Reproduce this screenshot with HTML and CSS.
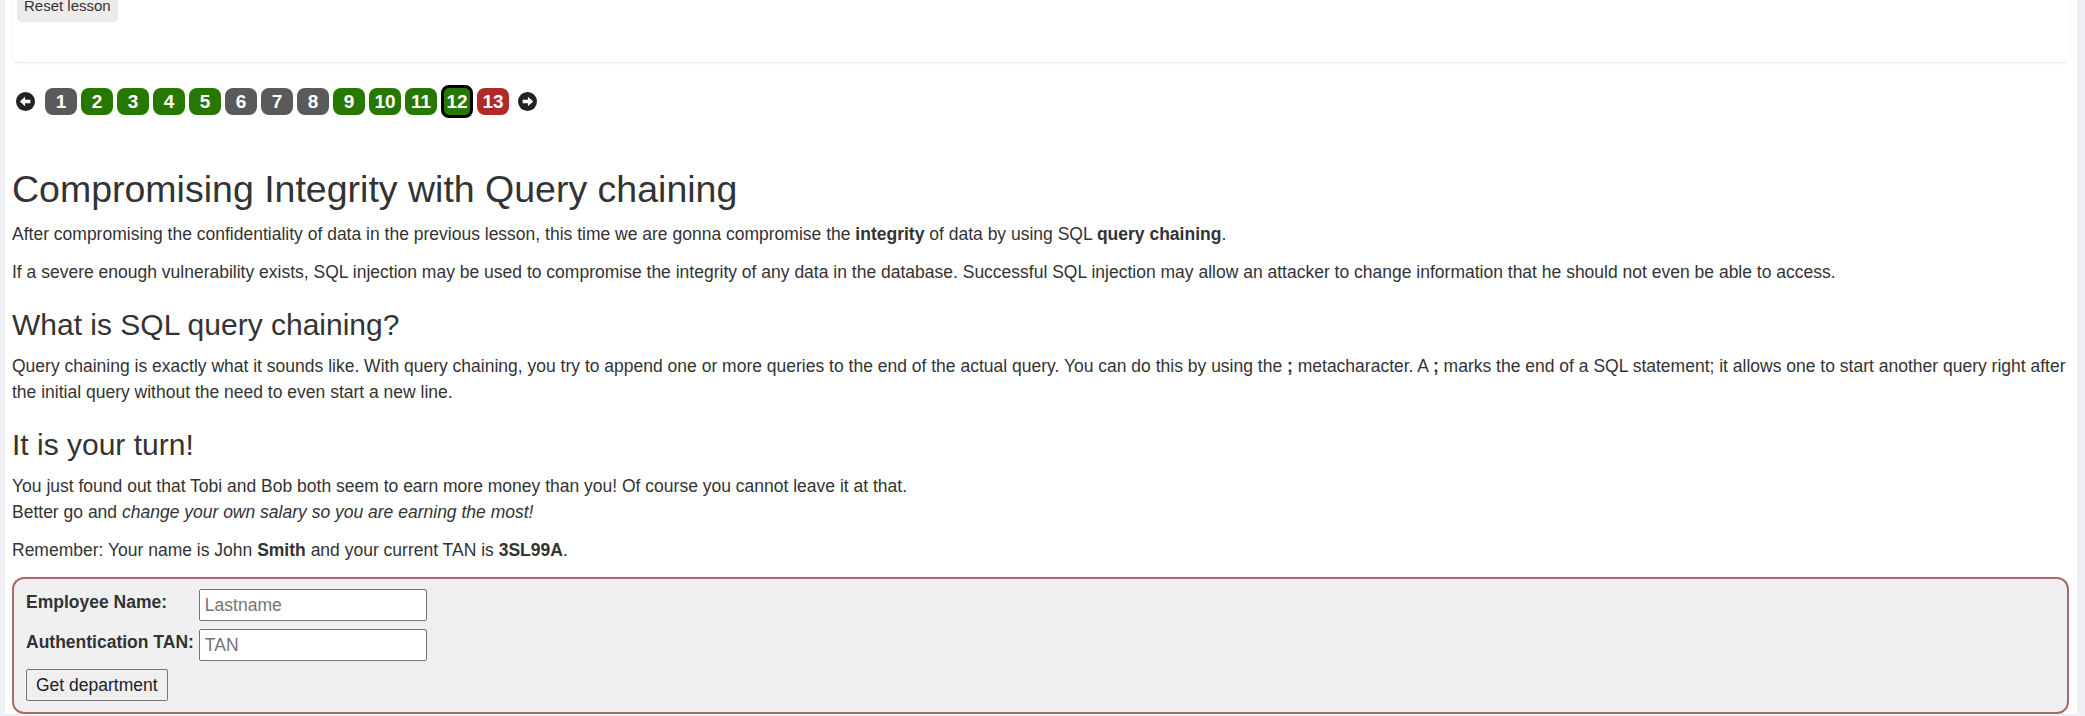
FILE: index.html
```html
<!DOCTYPE html>
<html lang="en">
<head>
<meta charset="utf-8">
<title>SQL Injection (intro)</title>
<link rel="stylesheet" href="styles.css">
</head>
<body>
<div class="main">
  <div class="top-card">
    <button class="reset-btn" type="button">Reset lesson</button>
  </div>

  <nav class="pager">
    <span class="pager-arrow">
      <svg width="19" height="19" viewBox="0 0 18 18"><circle cx="9" cy="9" r="9" fill="#222"/><path d="M3.6 9 L8.6 4.4 V7.4 H13.6 V10.6 H8.6 V13.6 Z" fill="#fff"/></svg>
    </span>
    <span class="page page-gray">1</span>
    <span class="page page-green">2</span>
    <span class="page page-green">3</span>
    <span class="page page-green">4</span>
    <span class="page page-green">5</span>
    <span class="page page-gray">6</span>
    <span class="page page-gray">7</span>
    <span class="page page-gray">8</span>
    <span class="page page-green">9</span>
    <span class="page page-green">10</span>
    <span class="page page-green">11</span>
    <span class="page page-green page-current">12</span>
    <span class="page page-red">13</span>
    <span class="pager-arrow pager-next">
      <svg width="19" height="19" viewBox="0 0 18 18"><circle cx="9" cy="9" r="9" fill="#222"/><path d="M14.4 9 L9.4 4.4 V7.4 H4.4 V10.6 H9.4 V13.6 Z" fill="#fff"/></svg>
    </span>
  </nav>

  <div class="lesson">
    <h1 class="title">Compromising Integrity with Query chaining</h1>
    <p class="text">After compromising the confidentiality of data in the previous lesson, this time we are gonna compromise the <b>integrity</b> of data by using SQL <b>query chaining</b>.</p>
    <p class="text">If a severe enough vulnerability exists, SQL injection may be used to compromise the integrity of any data in the database. Successful SQL injection may allow an attacker to change information that he should not even be able to access.</p>

    <h2 class="subtitle">What is SQL query chaining?</h2>
    <p class="text">Query chaining is exactly what it sounds like. With query chaining, you try to append one or more queries to the end of the actual query. You can do this by using the <b>;</b> metacharacter. A <b>;</b> marks the end of a SQL statement; it allows one to start another query right after the initial query without the need to even start a new line.</p>

    <h2 class="subtitle">It is your turn!</h2>
    <p class="text">You just found out that Tobi and Bob both seem to earn more money than you! Of course you cannot leave it at that.<br>Better go and <i>change your own salary so you are earning the most!</i></p>
    <p class="text">Remember: Your name is John <b>Smith</b> and your current TAN is <b>3SL99A</b>.</p>

    <form class="attack-form">
      <label class="field-label" for="name">Employee Name:</label>
      <input class="field-input" id="name" type="text" placeholder="Lastname">
      <label class="field-label" for="tan">Authentication TAN:</label>
      <input class="field-input" id="tan" type="text" placeholder="TAN">
      <div class="form-actions">
        <button class="submit-btn" type="button">Get department</button>
      </div>
    </form>
  </div>
</div>
</body>
</html>
```

FILE: styles.css
```css
html, body {
  margin: 0;
  padding: 0;
}

body {
  background: #eef0f5;
  font-family: "Liberation Sans", Arial, Helvetica, sans-serif;
  font-size: 17.5px;
  line-height: 26px;
  color: #333;
  overflow: hidden;
}

.main {
  margin: 0 8px 0 5px;
  background: #fff;
  min-height: 100vh;
  padding: 0 8px 0 7px;
  box-sizing: border-box;
}

.top-card {
  margin-top: -20px;
  padding: 10px 5px 40px;
  background: #fff;
  border-radius: 0 0 6px 6px;
  box-shadow: 0 1px 2px rgba(0, 0, 0, 0.09);
}

.reset-btn {
  display: block;
  height: 32px;
  padding: 0 6px;
  border: 1px solid #e9e9e9;
  border-radius: 4px;
  background: #ececec;
  color: #333;
  font-family: "Liberation Sans", Arial, sans-serif;
  font-size: 15px;
  line-height: 20px;
}

.pager {
  display: flex;
  align-items: center;
  gap: 4px;
  margin-top: 26px;
  padding-left: 4px;
  height: 27px;
}

.pager-arrow {
  display: flex;
  width: 19px;
  height: 19px;
  margin-right: 6px;
}

.pager-next {
  margin-left: 5px;
  margin-right: 0;
}

.page {
  box-sizing: border-box;
  display: flex;
  align-items: center;
  justify-content: center;
  width: 32px;
  height: 27px;
  border-radius: 8px;
  color: #fff;
  font-weight: bold;
  font-size: 19px;
  line-height: 1;
}

.page-gray { background: #5a5a5a; }
.page-green { background: #277800; }
.page-red { background: #b02a27; }

.page-current {
  height: 33px;
  border: 3px solid #000;
}

.lesson {
  padding-top: 54px;
}

.title {
  margin: 0 0 11px;
  font-size: 37.5px;
  font-weight: normal;
  line-height: 1.1;
}

.subtitle {
  margin: 23px 0 12px;
  font-size: 30px;
  font-weight: normal;
  line-height: 1.1;
}

.text {
  margin: 0 0 12px;
}

.attack-form {
  display: grid;
  grid-template-columns: max-content 228px;
  column-gap: 5px;
  row-gap: 8px;
  align-items: center;
  margin-top: 14px;
  padding: 10px 12px 11px;
  border: 2px solid #a86a6a;
  border-radius: 12px;
  background: #f0f0f0;
}

.field-label {
  font-weight: bold;
  padding-bottom: 6px;
}

.field-input {
  box-sizing: border-box;
  width: 228px;
  height: 32px;
  padding: 0 5px;
  border: 1px solid #767676;
  border-radius: 2px;
  background: #fff;
  font-family: "Liberation Sans", Arial, sans-serif;
  font-size: 17.5px;
  color: #333;
}

.field-input::placeholder {
  color: #757575;
}

.form-actions {
  grid-column: 1 / 3;
}

.submit-btn {
  height: 32px;
  padding: 0 9px;
  border: 1px solid #767676;
  border-radius: 2px;
  background: #efefef;
  color: #222;
  font-family: "Liberation Sans", Arial, sans-serif;
  font-size: 17.5px;
}
```
